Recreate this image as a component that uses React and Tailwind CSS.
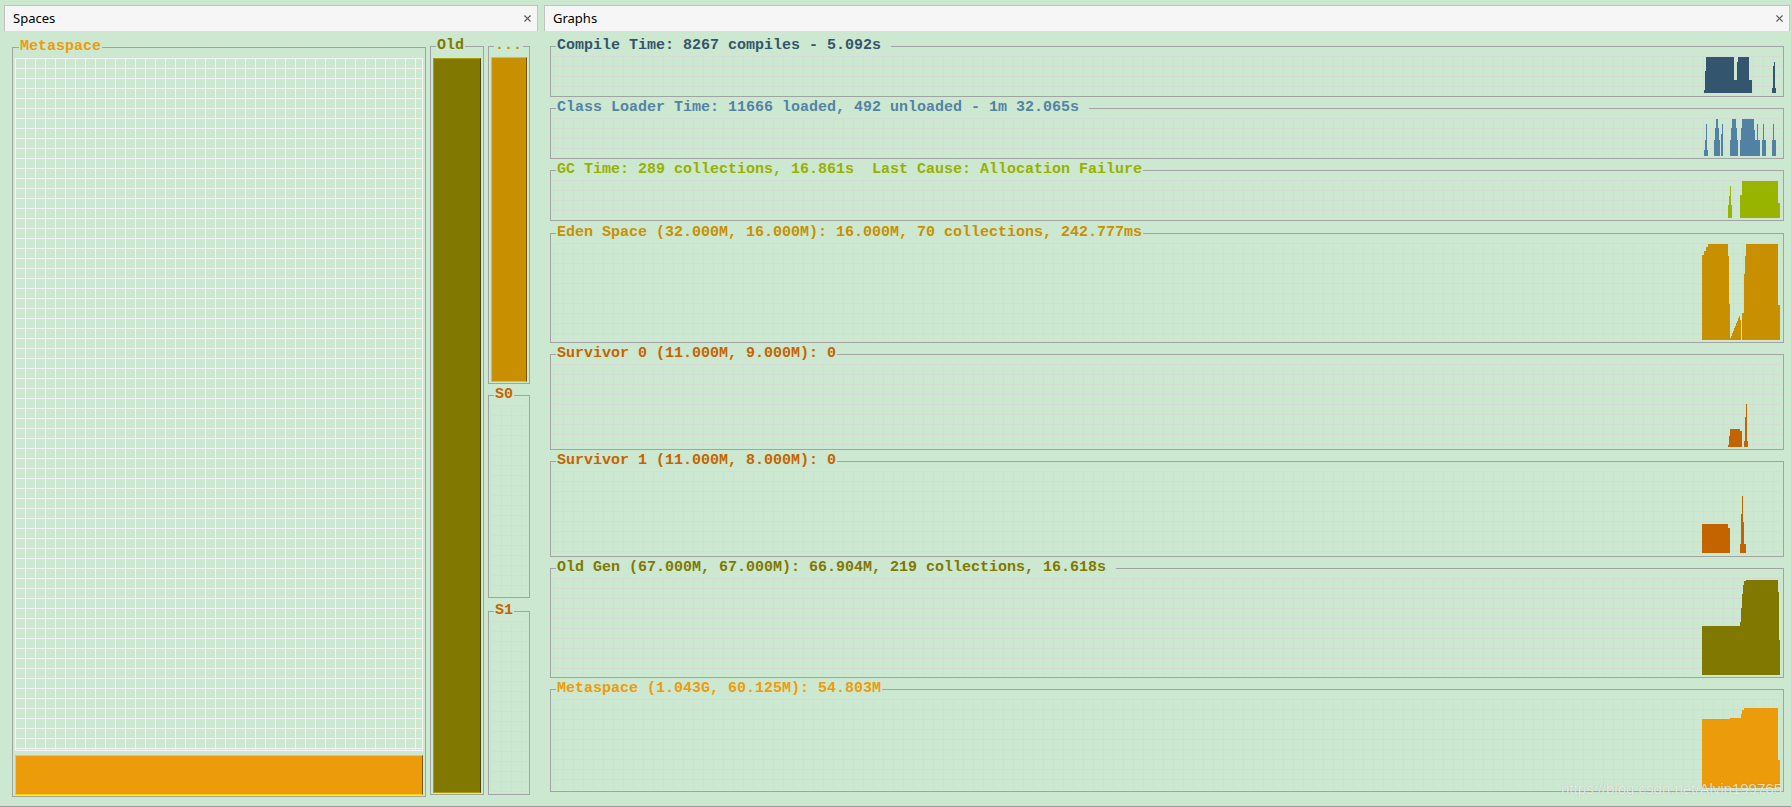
import { X } from "lucide-react";

const mono = "font-['Liberation_Mono','DejaVu_Sans_Mono',monospace] font-bold text-[15px] leading-[16px]";
const graphGrid =
  "bg-[linear-gradient(to_right,#d6dbd6_1px,transparent_1px),linear-gradient(to_bottom,#d6dbd6_1px,transparent_1px)] [background-size:10px_10px]";
const whiteGrid =
  "bg-[linear-gradient(to_right,#f3f5f3_1px,transparent_1px),linear-gradient(to_bottom,#f3f5f3_1px,transparent_1px)] [background-size:10px_10px] border-r border-b border-[#f3f5f3]";

// 1px columns going from y0 to y1
function ramp(x0, x1, y0, y1) {
  const out = [];
  const n = x1 - x0;
  for (let i = 0; i < n; i++) out.push([x0 + i, x0 + i + 1, Math.round(y0 + ((y1 - y0) * i) / Math.max(n - 1, 1))]);
  return out;
}

const graphs = [
  {
    title: "Compile Time: 8267 compiles - 5.092s ",
    text: "text-[#33556c]",
    box: "h-[59px]",
    fill: "#33566e",
    line: 46,
    bottom: 96,
    base: 93,
    segs: [
      [1704, 1705, 90], [1705, 1706, 71], [1706, 1734, 57], [1734, 1737, 80],
      [1737, 1738, 62], [1738, 1749, 57], [1749, 1752, 80],
      [1772, 1773, 88], [1773, 1774, 66], [1774, 1775, 62], [1775, 1776, 88],
    ],
  },
  {
    title: "Class Loader Time: 11666 loaded, 492 unloaded - 1m 32.065s ",
    text: "text-[#5383a5]",
    box: "mt-[3px] h-[59px]",
    fill: "#5282a3",
    line: 108,
    bottom: 158,
    base: 156,
    segs: [
      [1704, 1705, 150], [1705, 1706, 140], [1706, 1707, 124], [1707, 1708, 150],
      [1714, 1715, 140], [1715, 1716, 128], [1716, 1718, 119], [1718, 1719, 128], [1719, 1720, 140],
      [1721, 1722, 134], [1722, 1723, 124],
      [1730, 1731, 140], [1731, 1732, 128], [1732, 1736, 119], [1736, 1737, 128], [1737, 1738, 140],
      [1740, 1741, 140], [1741, 1742, 128], [1742, 1754, 119], [1754, 1755, 130], [1755, 1757, 140],
      [1757, 1758, 124], [1758, 1760, 140],
      [1762, 1763, 140], [1763, 1764, 124], [1764, 1766, 140],
      [1772, 1773, 140], [1773, 1774, 124], [1774, 1776, 140],
    ],
  },
  {
    title: "GC Time: 289 collections, 16.861s  Last Cause: Allocation Failure",
    text: "text-[#98b000]",
    box: "mt-[3px] h-[59px]",
    fill: "#98b400",
    line: 170,
    bottom: 220,
    base: 218,
    segs: [
      [1728, 1729, 205], [1729, 1730, 196], [1730, 1731, 186], [1731, 1732, 205],
      [1740, 1742, 195], [1742, 1778, 181], [1778, 1780, 203],
    ],
  },
  {
    title: "Eden Space (32.000M, 16.000M): 16.000M, 70 collections, 242.777ms",
    text: "text-[#c89000]",
    box: "mt-[4px] h-[118px]",
    fill: "#c89000",
    line: 233,
    bottom: 342,
    base: 340,
    segs: [
      [1702, 1704, 255], [1704, 1706, 251], [1706, 1708, 247], [1708, 1728, 244],
      [1728, 1729, 256], [1729, 1730, 304],
      ...ramp(1730, 1740, 338, 316),
      [1740, 1741, 320], [1742, 1744, 313], [1744, 1745, 274], [1745, 1746, 256],
      [1746, 1778, 244], [1778, 1780, 305],
    ],
  },
  {
    title: "Survivor 0 (11.000M, 9.000M): 0",
    text: "text-[#c46400]",
    box: "mt-[3px] h-[104px]",
    fill: "#c46400",
    line: 354,
    bottom: 449,
    base: 447,
    segs: [
      [1728, 1729, 445], [1729, 1730, 436], [1730, 1740, 429], [1740, 1742, 431],
      [1744, 1745, 441], [1745, 1746, 417], [1746, 1747, 404], [1747, 1748, 441],
    ],
  },
  {
    title: "Survivor 1 (11.000M, 8.000M): 0",
    text: "text-[#c46400]",
    box: "mt-[3px] h-[104px]",
    fill: "#c46400",
    line: 461,
    bottom: 556,
    base: 553,
    segs: [
      [1702, 1728, 524], [1728, 1730, 528],
      [1740, 1741, 544], [1741, 1742, 514], [1742, 1743, 496], [1743, 1744, 522], [1744, 1746, 544],
    ],
  },
  {
    title: "Old Gen (67.000M, 67.000M): 66.904M, 219 collections, 16.618s ",
    text: "text-[#807800]",
    box: "mt-[3px] h-[118px]",
    fill: "#807800",
    line: 568,
    bottom: 677,
    base: 675,
    segs: [
      [1702, 1740, 626], [1740, 1741, 622], [1741, 1742, 608], [1742, 1743, 594],
      [1743, 1744, 585], [1744, 1746, 581], [1746, 1778, 580], [1778, 1779, 592], [1779, 1780, 640],
    ],
  },
  {
    title: "Metaspace (1.043G, 60.125M): 54.803M",
    text: "text-[#ec9c0a]",
    box: "mt-[3px] h-[111px]",
    fill: "#ec9c0a",
    line: 689,
    bottom: 791,
    base: 788,
    segs: [
      [1702, 1730, 719], [1730, 1741, 718], [1741, 1742, 714], [1742, 1744, 710],
      [1744, 1746, 708], [1746, 1778, 708], [1778, 1780, 760],
    ],
  },
];

function Tab({ label }) {
  return (
    <div className="h-[26px] shrink-0 flex items-center justify-between bg-[#f6f6f6] border border-b-0 border-[#c2c2c2] pl-[8px] pr-[4px]">
      <span className="font-['Noto_Sans','DejaVu_Sans',sans-serif] text-[13px] text-black">{label}</span>
      <X size={11} strokeWidth={2.4} className="text-[#5a5a5a]" />
    </div>
  );
}

function Graph({ g }) {
  const top = g.line + 10;
  const h = g.bottom - g.line - 12;
  return (
    <fieldset className={`${g.box} shrink-0 flex flex-col border border-[#a3a3a3] px-[2px] pt-[2px] pb-[2px]`}>
      <legend className={`${mono} ${g.text} ml-[3px] px-[1px] whitespace-pre`}>{g.title}</legend>
      <div className={`flex-1 flex justify-end ${graphGrid}`}>
        <svg width="84" height={h} viewBox={`1697 ${top} 84 ${h}`} preserveAspectRatio="none" shapeRendering="crispEdges">
          {g.segs.map(([x0, x1, y], i) => (
            <rect key={i} x={x0} y={y} width={x1 - x0} height={g.base - y} fill={g.fill} />
          ))}
        </svg>
      </div>
    </fieldset>
  );
}

export default function App() {
  return (
    <div className="relative w-[1791px] h-[807px] overflow-hidden bg-[#cde8d0] border-b border-[#9a9a9a] flex gap-[6px] pl-[4px] pr-[1px] pt-[5px]">
      {/* Spaces */}
      <div className="w-[534px] shrink-0 flex flex-col">
        <Tab label="Spaces" />
        <div className="flex items-start pl-[8px] pt-[7px]">
          <fieldset className="mt-[1px] w-[414px] h-[758px] shrink-0 flex flex-col border border-[#a3a3a3] px-[2px] pt-[3px] pb-[1px]">
            <legend className={`${mono} text-[#ec9c0a] ml-[4px] px-[1px]`}>Metaspace</legend>
            <div className={`flex-1 ${whiteGrid}`} />
            <div className="mt-[4px] h-[40px] bg-[#ec9c0a] border border-[#f5d400] border-r-[#7a5a00]" />
          </fieldset>

          <fieldset className="ml-[4px] w-[54px] h-[757px] shrink-0 flex flex-col border border-[#a3a3a3] px-[2px] pt-[4px] pb-[1px]">
            <legend className={`${mono} text-[#807800] ml-[3px] px-[1px]`}>Old</legend>
            <div className="flex-1 bg-[#807800] border border-[#aaa000] border-r-[#4a4400]" />
          </fieldset>

          <div className="ml-[4px] w-[42px] shrink-0 flex flex-col">
            <fieldset className="h-[346px] shrink-0 border border-[#a3a3a3] px-[2px] pt-[3px] pb-[1px]">
              <legend className={`${mono} text-[#c89000] ml-[3px] px-[1px]`}>...</legend>
              <div className="h-[325px] bg-[#c89000] border border-[#f0c000] border-r-[#7a5800]" />
            </fieldset>
            <fieldset className="mt-[3px] h-[211px] shrink-0 border border-[#a3a3a3] px-[2px] pt-[2px] pb-[2px]">
              <legend className={`${mono} text-[#c46400] ml-[3px] px-[1px]`}>S0</legend>
              <div className={`h-[190px] ${graphGrid}`} />
            </fieldset>
            <fieldset className="mt-[5px] h-[192px] shrink-0 border border-[#a3a3a3] px-[2px] pt-[2px] pb-[2px]">
              <legend className={`${mono} text-[#c46400] ml-[3px] px-[1px]`}>S1</legend>
              <div className={`h-[171px] ${graphGrid}`} />
            </fieldset>
          </div>
        </div>
      </div>

      {/* Graphs */}
      <div className="flex-1 flex flex-col">
        <Tab label="Graphs" />
        <div className="flex flex-col px-[6px] pt-[7px]">
          {graphs.map((g) => (
            <Graph key={g.title} g={g} />
          ))}
        </div>
      </div>

      <div className="absolute right-[9px] bottom-[8px] font-['Liberation_Sans',Arial,sans-serif] text-[15px] leading-[18px] text-white/75 [text-shadow:0_0_1px_rgba(0,0,0,0.25)]">
        https://blog.csdn.net/Alvin199765
      </div>
    </div>
  );
}
